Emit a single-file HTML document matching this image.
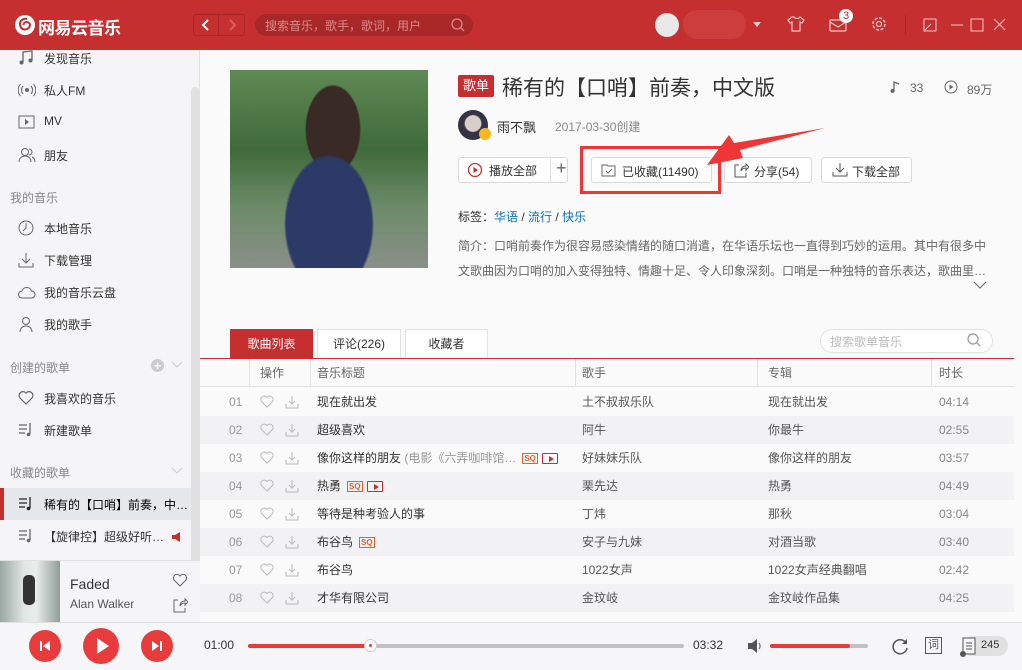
<!DOCTYPE html>
<html><head><meta charset="utf-8"><style>
*{box-sizing:border-box;margin:0;padding:0}
body{width:1022px;height:670px;overflow:hidden;position:relative;font-family:"Liberation Sans","Noto Sans CJK SC",sans-serif;font-size:12px;color:#333;background:#fafafa}
.a{position:absolute}
.hdr{left:0;top:0;width:1022px;height:50px;background:#c62f2f}
.side{left:0;top:50px;width:200px;height:572px;background:#f5f5f7;border-right:1px solid #e1e1e2}
.si{position:absolute;left:44px;font-size:12px;color:#333}
.sh{position:absolute;left:10px;font-size:12px;color:#888}
.ic{position:absolute;left:18px}
.btn{position:absolute;top:157px;height:26px;border:1px solid #d9d9d9;border-radius:3px;background:#fff;font-size:12px;line-height:24px;color:#333}
.row{position:absolute;left:200px;width:814px;height:28px;line-height:28px;font-size:12px}
.row span{position:absolute}
.n{left:29px;color:#999}
.t{left:117px;color:#333;white-space:nowrap}
.s{left:382px;color:#555}
.al{left:568px;color:#555}
.d{left:739px;color:#888}
.hv{left:60px;top:7px}
.dl{left:85px;top:7px}
.row .sq{position:relative;display:inline-block;border:1px solid #e8602c;color:#e8602c;font-size:8px;line-height:8px;height:11px;padding:1px 1px;margin-left:6px;vertical-align:middle;font-weight:bold}
.row .mv{display:inline-block;border:1px solid #c62f2f;width:16px;height:11px;margin-left:4px;vertical-align:middle;position:relative;border-radius:1px}
.row .mv:after{content:"";position:absolute;left:6px;top:2px;border-left:5px solid #c62f2f;border-top:3px solid transparent;border-bottom:3px solid transparent}
.row .gr{position:static;color:#999}
.tab{position:absolute;top:329px;height:29px;line-height:28px;text-align:center;font-size:12px;border:1px solid #e1e1e2;border-bottom:none;background:#fff;color:#333}
</style></head><body>
<div class="a hdr">
  <svg class="a" style="left:14px;top:14px" width="22" height="22" viewBox="0 0 22 22"><circle cx="11" cy="11" r="10" fill="#fff"/><path d="M13 5c-3-1-7 1-7 5a5 5 0 0 0 10 1c0-2-2-3-3.5-3s-3 1-3 3" stroke="#c62f2f" stroke-width="2" fill="none"/></svg>
  <div class="a" style="left:38px;top:14px;font-size:17px;color:#fff;font-weight:bold;letter-spacing:-0.5px">网易云音乐</div>
  <div class="a" style="left:193px;top:14px;width:52px;height:22px;border:1px solid #a82828;border-radius:3px"></div>
  <div class="a" style="left:218px;top:14px;width:1px;height:22px;background:#a82828"></div>
  <svg class="a" style="left:199px;top:17px" width="14" height="16"><path d="M9 3L4 8l5 5" stroke="#fff" stroke-width="2" fill="none"/></svg>
  <svg class="a" style="left:225px;top:17px" width="14" height="16"><path d="M5 3l5 5-5 5" stroke="#d96060" stroke-width="2" fill="none"/></svg>
  <div class="a" style="left:255px;top:14px;width:218px;height:22px;border-radius:11px;background:#a82828"></div>
  <div class="a" style="left:265px;top:17px;color:#d88a8a;font-size:12px">搜索音乐，歌手，歌词，用户</div>
  <svg class="a" style="left:450px;top:17px" width="16" height="16"><circle cx="7" cy="7" r="5" stroke="#d88a8a" stroke-width="1.3" fill="none"/><path d="M11 11l3 3" stroke="#d88a8a" stroke-width="1.3"/></svg>
  <div class="a" style="left:655px;top:13px;width:24px;height:24px;border-radius:50%;background:#e8e8e8"></div>
  <div class="a" style="left:683px;top:10px;width:63px;height:29px;border-radius:14px;background:#cd3d3d"></div>
  <div class="a" style="left:753px;top:22px;border-top:5px solid #f0c8c8;border-left:4px solid transparent;border-right:4px solid transparent"></div>
  <svg class="a" style="left:786px;top:14px" width="20" height="20"><path d="M6 3l-4 3 2 3 2-1v9h8V8l2 1 2-3-4-3c-1 2-5 2-6 0z" stroke="#f0c8c8" stroke-width="1.2" fill="none"/></svg>
  <svg class="a" style="left:829px;top:16px" width="20" height="18"><rect x="1" y="4" width="16" height="11" rx="1" stroke="#f0c8c8" stroke-width="1.2" fill="none"/><path d="M1 6l8 5 8-5" stroke="#f0c8c8" stroke-width="1.2" fill="none"/></svg>
  <div class="a" style="left:839px;top:9px;width:14px;height:14px;border-radius:50%;background:#fff;color:#c62f2f;font-size:11px;text-align:center;line-height:14px">3</div>
  <svg class="a" style="left:870px;top:15px" width="18" height="18"><circle cx="9" cy="9" r="6" stroke="#f0c8c8" stroke-width="1.5" fill="none" stroke-dasharray="3 1.7"/><circle cx="9" cy="9" r="2.5" stroke="#f0c8c8" stroke-width="1.2" fill="none"/></svg>
  <div class="a" style="left:905px;top:15px;width:1px;height:20px;background:#a82828"></div>
  <svg class="a" style="left:922px;top:16px" width="90" height="18"><rect x="2" y="3" width="12" height="12" stroke="#f0c8c8" fill="none"/><path d="M3 14l6-6" stroke="#f0c8c8"/><path d="M29 9h12" stroke="#f0c8c8"/><rect x="49" y="3" width="12" height="12" stroke="#f0c8c8" fill="none"/><path d="M72 3l11 11M83 3L72 14" stroke="#f0c8c8" stroke-width="1.2"/></svg>
</div>

<div class="a side">
  <div class="a" style="left:191px;top:37px;width:8px;height:535px;background:#e1e1e2;border-radius:4px"></div>
  <svg class="ic" style="top:0" width="16" height="16"><path d="M5 12V2l9-1v9" stroke="#666" stroke-width="1.3" fill="none"/><circle cx="3.5" cy="12.5" r="2" fill="#666"/><circle cx="12.5" cy="10.5" r="2" fill="#666"/></svg>
  <div class="si" style="top:0">发现音乐</div>
  <svg class="ic" style="top:32px" width="18" height="16"><circle cx="9" cy="8" r="2" fill="#666"/><path d="M5 4a6 6 0 0 0 0 8M13 4a6 6 0 0 1 0 8M2.5 2a9 9 0 0 0 0 12M15.5 2a9 9 0 0 1 0 12" stroke="#666" fill="none"/></svg>
  <div class="si" style="top:32px">私人FM</div>
  <svg class="ic" style="top:64px" width="18" height="16"><rect x="1" y="2" width="15" height="12" stroke="#666" fill="none"/><path d="M7 5v6l4-3z" fill="#666"/></svg>
  <div class="si" style="top:64px">MV</div>
  <svg class="ic" style="top:96px" width="18" height="18"><circle cx="7" cy="6" r="3.5" stroke="#666" fill="none"/><path d="M1 16c0-4 3-6 6-6s6 2 6 6M11 3a3 3 0 0 1 0 6M14 11c2 1 3 3 3 5" stroke="#666" fill="none"/></svg>
  <div class="si" style="top:97px">朋友</div>
  <div class="sh" style="top:139px">我的音乐</div>
  <svg class="ic" style="top:170px" width="18" height="18"><circle cx="8" cy="8" r="7" stroke="#666" fill="none"/><path d="M8 3v5l-3 3" stroke="#666" fill="none"/></svg>
  <div class="si" style="top:170px">本地音乐</div>
  <svg class="ic" style="top:202px" width="18" height="18"><path d="M8 1v10M4 7l4 4 4-4M1 11v4h14v-4" stroke="#666" fill="none"/></svg>
  <div class="si" style="top:202px">下载管理</div>
  <svg class="ic" style="top:234px" width="18" height="18"><path d="M4 14a3.5 3.5 0 0 1 0-7 5 5 0 0 1 9.5 0 3.5 3.5 0 0 1 0 7z" stroke="#666" fill="none"/></svg>
  <div class="si" style="top:234px">我的音乐云盘</div>
  <svg class="ic" style="top:266px" width="18" height="18"><circle cx="8" cy="5" r="3.5" stroke="#666" fill="none"/><path d="M2 16c0-4 3-6 6-6s6 2 6 6" stroke="#666" fill="none"/></svg>
  <div class="si" style="top:266px">我的歌手</div>
  <div class="sh" style="top:309px">创建的歌单</div>
  <div class="a" style="left:151px;top:309px;width:13px;height:13px;border-radius:50%;background:#ccc;color:#fff;text-align:center;line-height:13px;font-size:13px;font-weight:bold">+</div>
  <svg class="a" style="left:171px;top:311px" width="12" height="8"><path d="M1 1l5 5 5-5" stroke="#ccc" fill="none"/></svg>
  <svg class="ic" style="top:340px" width="18" height="16"><path d="M8 14L2 8a3.5 3.5 0 0 1 6-5 3.5 3.5 0 0 1 6 5z" stroke="#666" fill="none" stroke-width="1.2"/></svg>
  <div class="si" style="top:340px">我喜欢的音乐</div>
  <svg class="ic" style="top:372px" width="18" height="16"><path d="M1 3h8M1 7h8M1 11h6M12 1v11" stroke="#666" fill="none" stroke-width="1.3"/><circle cx="10.5" cy="12.5" r="1.8" fill="#666"/></svg>
  <div class="si" style="top:372px">新建歌单</div>
  <div class="sh" style="top:414px">收藏的歌单</div>
  <svg class="a" style="left:171px;top:417px" width="12" height="8"><path d="M1 1l5 5 5-5" stroke="#ccc" fill="none"/></svg>
  <div class="a" style="left:0;top:438px;width:191px;height:32px;background:#e6e7ea"></div>
  <div class="a" style="left:0;top:438px;width:4px;height:32px;background:#c62f2f"></div>
  <svg class="ic" style="top:446px" width="18" height="16"><path d="M1 3h8M1 7h8M1 11h6M12 1v11" stroke="#222" fill="none" stroke-width="1.3"/><circle cx="10.5" cy="12.5" r="1.8" fill="#222"/></svg>
  <div class="si" style="top:446px;color:#000">稀有的【口哨】前奏，中…</div>
  <svg class="ic" style="top:478px" width="18" height="16"><path d="M1 3h8M1 7h8M1 11h6M12 1v11" stroke="#666" fill="none" stroke-width="1.3"/><circle cx="10.5" cy="12.5" r="1.8" fill="#666"/></svg>
  <div class="si" style="top:478px">【旋律控】超级好听…</div>
  <svg class="a" style="left:171px;top:481px" width="10" height="12"><path d="M1 4h3l5-3v10L4 8H1z" fill="#c62f2f"/></svg>
  <div class="a" style="left:0;top:510px;width:200px;height:62px;background:#f5f5f7;border-top:1px solid #e1e1e2"></div>
  <div class="a" style="left:0;top:511px;width:60px;height:61px;background:linear-gradient(90deg,#9aa7a2,#dfe6e3 40%,#e8eeec 60%,#8f9c97)"></div>
  <div class="a" style="left:23px;top:525px;width:12px;height:30px;background:#333;border-radius:5px"></div>
  <div class="a" style="left:70px;top:526px;font-size:14px;color:#333">Faded</div>
  <div class="a" style="left:70px;top:547px;font-size:12px;color:#555">Alan Walker</div>
  <svg class="a" style="left:172px;top:523px" width="16" height="14"><path d="M8 13L2 7a3.3 3.3 0 0 1 6-4 3.3 3.3 0 0 1 6 4z" stroke="#666" fill="none"/></svg>
  <svg class="a" style="left:172px;top:547px" width="16" height="16"><path d="M6 3H2v12h11v-4M8 9c0-3 2-5 5-5V2l3 3-3 3V6c-2 0-4 1-5 3" stroke="#666" fill="none"/></svg>
</div>

<!-- main -->
<div class="a" style="left:230px;top:70px;width:198px;height:198px;background:radial-gradient(ellipse 45px 70px at 50% 78%,#2c3a68 0 95%,transparent 100%),radial-gradient(ellipse 28px 45px at 52% 30%,#3a2a26 0 95%,transparent 100%),linear-gradient(180deg,#5f8a55,#3f6a3a 40%,#6d8c6a 70%,#8a8f88)"></div>
<div class="a" style="left:458px;top:75px;width:36px;height:22px;background:#c62f2f;border-radius:2px;color:#fff;font-size:13px;text-align:center;line-height:22px">歌单</div>
<div class="a" style="left:502px;top:72px;font-size:21px;color:#333">稀有的【口哨】前奏，中文版</div>
<svg class="a" style="left:889px;top:80px" width="12" height="14"><path d="M5 11V2l5 2" stroke="#666" fill="none" stroke-width="1.3"/><circle cx="3.5" cy="11" r="2" fill="#666"/></svg>
<div class="a" style="left:910px;top:81px;color:#666">33</div>
<svg class="a" style="left:944px;top:80px" width="14" height="14"><circle cx="7" cy="7" r="6" stroke="#666" fill="none"/><path d="M5.5 4.5v5l4-2.5z" fill="#666"/></svg>
<div class="a" style="left:967px;top:81px;color:#666">89万</div>
<div class="a" style="left:458px;top:110px;width:30px;height:30px;border-radius:50%;background:radial-gradient(circle at 50% 45%,#d8cfc8 0 35%,#334 40%)"></div>
<div class="a" style="left:479px;top:128px;width:12px;height:12px;border-radius:50%;background:#f5b820"></div>
<div class="a" style="left:497px;top:117px;font-size:13px;color:#333">雨不飘</div>
<div class="a" style="left:555px;top:118px;font-size:12px;color:#888">2017-03-30创建</div>

<div class="btn" style="left:458px;width:110px"></div>
<div class="a" style="left:550px;top:158px;width:1px;height:24px;background:#e1e1e2"></div>
<svg class="a" style="left:467px;top:162px" width="16" height="16"><circle cx="8" cy="8" r="6.5" stroke="#c62f2f" stroke-width="1.3" fill="none"/><path d="M6.5 5v6l4.5-3z" fill="#c62f2f"/></svg>
<div class="a" style="left:489px;top:162px;font-size:12px">播放全部</div>
<div class="a" style="left:556px;top:158px;font-size:18px;color:#666">+</div>
<div class="btn" style="left:591px;width:121px"></div>
<svg class="a" style="left:601px;top:163px" width="16" height="14"><path d="M1 2h5l1 1h7v10H1z" stroke="#666" fill="none"/><path d="M5 8l2 2 4-4" stroke="#666" fill="none"/></svg>
<div class="a" style="left:622px;top:163px;font-size:12px">已收藏<span style="color:#333">(11490)</span></div>
<div class="a" style="left:580px;top:146px;width:141px;height:48px;border:3px solid #ee3636"></div>
<div class="btn" style="left:724px;width:88px"></div>
<svg class="a" style="left:733px;top:162px" width="16" height="16"><path d="M6 3H2v12h11v-4M8 9c0-3 2-5 5-5V2l3 3-3 3V6c-2 0-4 1-5 3" stroke="#555" fill="none"/></svg>
<div class="a" style="left:754px;top:163px;font-size:12px">分享(54)</div>
<div class="btn" style="left:821px;width:91px"></div>
<svg class="a" style="left:832px;top:162px" width="16" height="16"><path d="M8 1v9M4 6l4 4 4-4M1 10v4h14v-4" stroke="#555" fill="none"/></svg>
<div class="a" style="left:852px;top:163px;font-size:12px">下载全部</div>
<svg class="a" style="left:700px;top:120px" width="130" height="50"><path d="M125 8L40 30l3 8-36 7 22-30 5 8z" fill="#ee3636"/></svg>

<div class="a" style="left:458px;top:208px;font-size:12px;color:#333">标签：<span style="color:#0c73c2">华语</span> / <span style="color:#0c73c2">流行</span> / <span style="color:#0c73c2">快乐</span></div>
<div class="a" style="left:458px;top:234px;width:535px;font-size:12px;color:#666;line-height:25px">简介：口哨前奏作为很容易感染情绪的随口消遣，在华语乐坛也一直得到巧妙的运用。其中有很多中文歌曲因为口哨的加入变得独特、情趣十足、令人印象深刻。口哨是一种独特的音乐表达，歌曲里…</div>
<svg class="a" style="left:973px;top:281px" width="14" height="9"><path d="M1 1l6 6 6-6" stroke="#666" fill="none"/></svg>

<div class="tab" style="left:230px;width:83px;background:#c62f2f;color:#fff;border-color:#c62f2f">歌曲列表</div>
<div class="tab" style="left:317px;width:84px">评论(226)</div>
<div class="tab" style="left:405px;width:83px">收藏者</div>
<div class="a" style="left:820px;top:329px;width:173px;height:24px;border:1px solid #e1e1e2;border-radius:12px;background:#fff"></div>
<div class="a" style="left:830px;top:333px;color:#bbb;font-size:12px">搜索歌单音乐</div>
<svg class="a" style="left:966px;top:332px" width="16" height="16"><circle cx="7" cy="7" r="5" stroke="#999" fill="none" stroke-width="1.2"/><path d="M11 11l3 3" stroke="#999" stroke-width="1.2"/></svg>
<div class="a" style="left:200px;top:358px;width:814px;height:1px;background:#c62f2f"></div>

<div class="row" style="top:359px;border-bottom:1px solid #e1e1e2;color:#666">
  <span style="left:60px">操作</span><span style="left:117px">音乐标题</span><span style="left:382px">歌手</span><span style="left:568px">专辑</span><span style="left:739px">时长</span>
  <span style="left:49px;top:0;width:1px;height:28px;background:#e1e1e2"></span>
  <span style="left:110px;top:0;width:1px;height:28px;background:#e1e1e2"></span>
  <span style="left:375px;top:0;width:1px;height:28px;background:#e1e1e2"></span>
  <span style="left:557px;top:0;width:1px;height:28px;background:#e1e1e2"></span>
  <span style="left:731px;top:0;width:1px;height:28px;background:#e1e1e2"></span>
</div>

<svg width="0" height="0" style="position:absolute"><defs>
<g id="h"><path d="M7 12L1.5 6.5a3 3 0 0 1 5.5-4 3 3 0 0 1 5.5 4z" stroke="#bbb" fill="none"/></g>
<g id="dw"><path d="M7 1v8M4 6l3 3 3-3M1 9v4h12V9" stroke="#bbb" fill="none"/></g>
</defs></svg>

<div class="row" style="top:388px;background:#fafafa"><span class="n">01</span><svg class="hv" style="position:absolute" width="15" height="14"><use href="#h"/></svg><svg class="dl" style="position:absolute" width="15" height="14"><use href="#dw"/></svg><span class="t">现在就出发</span><span class="s">土不叔叔乐队</span><span class="al">现在就出发</span><span class="d">04:14</span></div>
<div class="row" style="top:416px;background:#f2f2f4"><span class="n">02</span><svg class="hv" style="position:absolute" width="15" height="14"><use href="#h"/></svg><svg class="dl" style="position:absolute" width="15" height="14"><use href="#dw"/></svg><span class="t">超级喜欢</span><span class="s">阿牛</span><span class="al">你最牛</span><span class="d">02:55</span></div>
<div class="row" style="top:444px;background:#fafafa"><span class="n">03</span><svg class="hv" style="position:absolute" width="15" height="14"><use href="#h"/></svg><svg class="dl" style="position:absolute" width="15" height="14"><use href="#dw"/></svg><span class="t">像你这样的朋友 <span class="gr">(电影《六弄咖啡馆…</span><span class="sq">SQ</span><span class="mv"></span></span><span class="s">好妹妹乐队</span><span class="al">像你这样的朋友</span><span class="d">03:57</span></div>
<div class="row" style="top:472px;background:#f2f2f4"><span class="n">04</span><svg class="hv" style="position:absolute" width="15" height="14"><use href="#h"/></svg><svg class="dl" style="position:absolute" width="15" height="14"><use href="#dw"/></svg><span class="t">热勇<span class="sq">SQ</span><span class="mv"></span></span><span class="s">栗先达</span><span class="al">热勇</span><span class="d">04:49</span></div>
<div class="row" style="top:500px;background:#fafafa"><span class="n">05</span><svg class="hv" style="position:absolute" width="15" height="14"><use href="#h"/></svg><svg class="dl" style="position:absolute" width="15" height="14"><use href="#dw"/></svg><span class="t">等待是种考验人的事</span><span class="s">丁炜</span><span class="al">那秋</span><span class="d">03:04</span></div>
<div class="row" style="top:528px;background:#f2f2f4"><span class="n">06</span><svg class="hv" style="position:absolute" width="15" height="14"><use href="#h"/></svg><svg class="dl" style="position:absolute" width="15" height="14"><use href="#dw"/></svg><span class="t">布谷鸟<span class="sq">SQ</span></span><span class="s">安子与九妹</span><span class="al">对酒当歌</span><span class="d">03:40</span></div>
<div class="row" style="top:556px;background:#fafafa"><span class="n">07</span><svg class="hv" style="position:absolute" width="15" height="14"><use href="#h"/></svg><svg class="dl" style="position:absolute" width="15" height="14"><use href="#dw"/></svg><span class="t">布谷鸟</span><span class="s">1022女声</span><span class="al">1022女声经典翻唱</span><span class="d">02:42</span></div>
<div class="row" style="top:584px;background:#f2f2f4"><span class="n">08</span><svg class="hv" style="position:absolute" width="15" height="14"><use href="#h"/></svg><svg class="dl" style="position:absolute" width="15" height="14"><use href="#dw"/></svg><span class="t">才华有限公司</span><span class="s">金玟岐</span><span class="al">金玟岐作品集</span><span class="d">04:25</span></div>
<div class="row" style="top:612px;height:10px;background:#fafafa"></div>
<div class="a" style="left:1014px;top:50px;width:8px;height:572px;background:#fafafa"></div>

<!-- player -->
<div class="a" style="left:0;top:622px;width:1022px;height:48px;background:#f6f6f8;border-top:1px solid #e1e1e2"></div>
<div class="a" style="left:29px;top:630px;width:32px;height:32px;border-radius:50%;background:#e83c3c"></div>
<svg class="a" style="left:38px;top:639px" width="14" height="14"><path d="M3 2v10" stroke="#fff" stroke-width="2"/><path d="M12 2v10L5 7z" fill="#fff"/></svg>
<div class="a" style="left:83px;top:628px;width:36px;height:36px;border-radius:50%;background:#e83c3c"></div>
<svg class="a" style="left:94px;top:636px" width="16" height="20"><path d="M3 2v16l12-8z" fill="#fff"/></svg>
<div class="a" style="left:141px;top:630px;width:32px;height:32px;border-radius:50%;background:#e83c3c"></div>
<svg class="a" style="left:150px;top:639px" width="14" height="14"><path d="M2 2v10l7-5z" fill="#fff"/><path d="M11 2v10" stroke="#fff" stroke-width="2"/></svg>
<div class="a" style="left:204px;top:638px;font-size:12px;color:#333">01:00</div>
<div class="a" style="left:248px;top:644px;width:436px;height:4px;background:#c2c2c4;border-radius:2px"></div>
<div class="a" style="left:248px;top:644px;width:123px;height:4px;background:#e83c3c;border-radius:2px"></div>
<div class="a" style="left:364px;top:639px;width:13px;height:13px;border-radius:50%;background:#fff;border:1px solid #ccc"></div>
<div class="a" style="left:369px;top:644px;width:3px;height:3px;border-radius:50%;background:#e83c3c"></div>
<div class="a" style="left:693px;top:638px;font-size:12px;color:#333">03:32</div>
<svg class="a" style="left:747px;top:638px" width="18" height="16"><path d="M1 5h4l5-4v14l-5-4H1z" fill="#555"/><path d="M12 5c1.5 1.5 1.5 4.5 0 6" stroke="#555" fill="none"/></svg>
<div class="a" style="left:770px;top:644px;width:98px;height:4px;background:#c2c2c4;border-radius:2px"></div>
<div class="a" style="left:770px;top:644px;width:80px;height:4px;background:#e83c3c;border-radius:2px"></div>
<svg class="a" style="left:891px;top:637px" width="18" height="18"><path d="M15 6a7 7 0 1 0 1 5" stroke="#555" stroke-width="1.5" fill="none"/><path d="M16 2v5h-5" fill="#555"/></svg>
<div class="a" style="left:925px;top:637px;width:17px;height:17px;border:1px solid #555;font-size:11px;text-align:center;line-height:15px;color:#555">词</div>
<div class="a" style="left:962px;top:636px;width:46px;height:20px;border-radius:10px;background:#e1e1e2"></div>
<svg class="a" style="left:959px;top:636px" width="20" height="22"><rect x="4" y="2" width="12" height="16" stroke="#555" fill="#f6f6f8"/><path d="M7 7h6M7 10h6M7 13h6" stroke="#555"/><circle cx="4" cy="18" r="3" fill="#555"/></svg>
<div class="a" style="left:981px;top:639px;font-size:11px;color:#333">245</div>
</body></html>
